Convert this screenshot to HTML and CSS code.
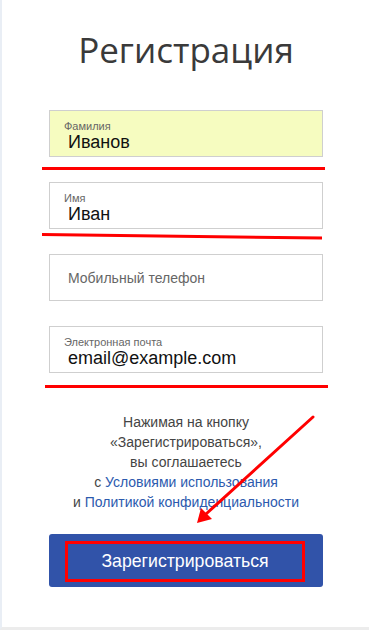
FILE: index.html
```html
<!DOCTYPE html>
<html lang="ru">
<head>
<meta charset="utf-8">
<link rel="stylesheet" href="styles.css">
</head>
<body>
<div class="page">
  <div class="form">
    <h1 class="title">Регистрация</h1>
    <div class="field filled">
      <span class="label">Фамилия</span>
      <span class="value">Иванов</span>
    </div>
    <div class="field">
      <span class="label">Имя</span>
      <span class="value">Иван</span>
    </div>
    <div class="field empty">
      <span class="placeholder">Мобильный телефон</span>
    </div>
    <div class="field">
      <span class="label">Электронная почта</span>
      <span class="value">email@example.com</span>
    </div>
    <p class="terms">Нажимая на кнопку<br>«Зарегистрироваться»,<br>вы соглашаетесь<br>с <a href="#">Условиями использования</a><br>и <a href="#">Политикой конфиденциальности</a></p>
    <button class="submit"><span class="mark">Зарегистрироваться</span></button>
  </div>
  <svg class="notes" width="369" height="630" viewBox="0 0 369 630">
    <path d="M42 168.5 L325 168.5" stroke="#ff0000" stroke-width="3" fill="none"/>
    <path d="M42 234.5 L322 238" stroke="#ff0000" stroke-width="3" fill="none"/>
    <path d="M45 386.5 L328 386.5" stroke="#ff0000" stroke-width="3" fill="none"/>
    <path d="M313 417 L206 514" stroke="#ff0000" stroke-width="3" fill="none" stroke-linecap="round"/>
    <path d="M197 523 L201 508 L212 519 Z" fill="#ff0000"/>
  </svg>
</div>
</body>
</html>
```
FILE: styles.css
```css
html, body {
  margin: 0;
  padding: 0;
  background: #ffffff;
}
.page {
  position: relative;
  width: 369px;
  height: 630px;
  box-sizing: border-box;
  border-left: 2px solid #e9eef5;
  border-bottom: 3px solid #ececec;
  overflow: hidden;
}
.form {
  width: 274px;
  margin-left: 47px;
  padding-top: 28px;
  display: flex;
  flex-direction: column;
  font-family: "Liberation Sans", Arial, sans-serif;
}
.title {
  margin: 0 0 38px 0;
  font-family: "Open Sans", "Noto Sans", sans-serif;
  font-weight: 400;
  font-size: 35px;
  line-height: 44px;
  color: #3a3a3a;
  text-align: center;
}
.field {
  height: 47px;
  box-sizing: border-box;
  border: 1px solid #cfcfcf;
  background: #fff;
  margin-bottom: 25px;
  display: flex;
  flex-direction: column;
  padding: 9px 0 0 14px;
}
.field.filled {
  background: #f6fcc0;
}
.field.empty {
  justify-content: center;
  padding: 0 0 0 18px;
}
.label {
  font-size: 11px;
  line-height: 12px;
  color: #666;
}
.value {
  font-size: 18px;
  line-height: 20px;
  color: #111;
  padding-left: 4px;
}
.placeholder {
  font-size: 14px;
  color: #666;
}
.terms {
  margin: 14px 0 0 0;
  font-size: 14px;
  line-height: 20px;
  color: #444;
  text-align: center;
}
.terms a {
  color: #2c5aae;
  text-decoration: none;
}
.submit {
  margin-top: 22px;
  height: 53px;
  border: none;
  border-radius: 3px;
  background: #3153a9;
  padding: 7px 18px 5px 16px;
  display: flex;
  cursor: pointer;
}
.mark {
  flex: 1;
  border: 3px solid #ff0000;
  display: flex;
  align-items: center;
  justify-content: center;
  font-family: "Liberation Sans", Arial, sans-serif;
  font-size: 17.7px;
  color: #fff;
}
.notes {
  position: absolute;
  left: -2px;
  top: 0;
  pointer-events: none;
}
```
